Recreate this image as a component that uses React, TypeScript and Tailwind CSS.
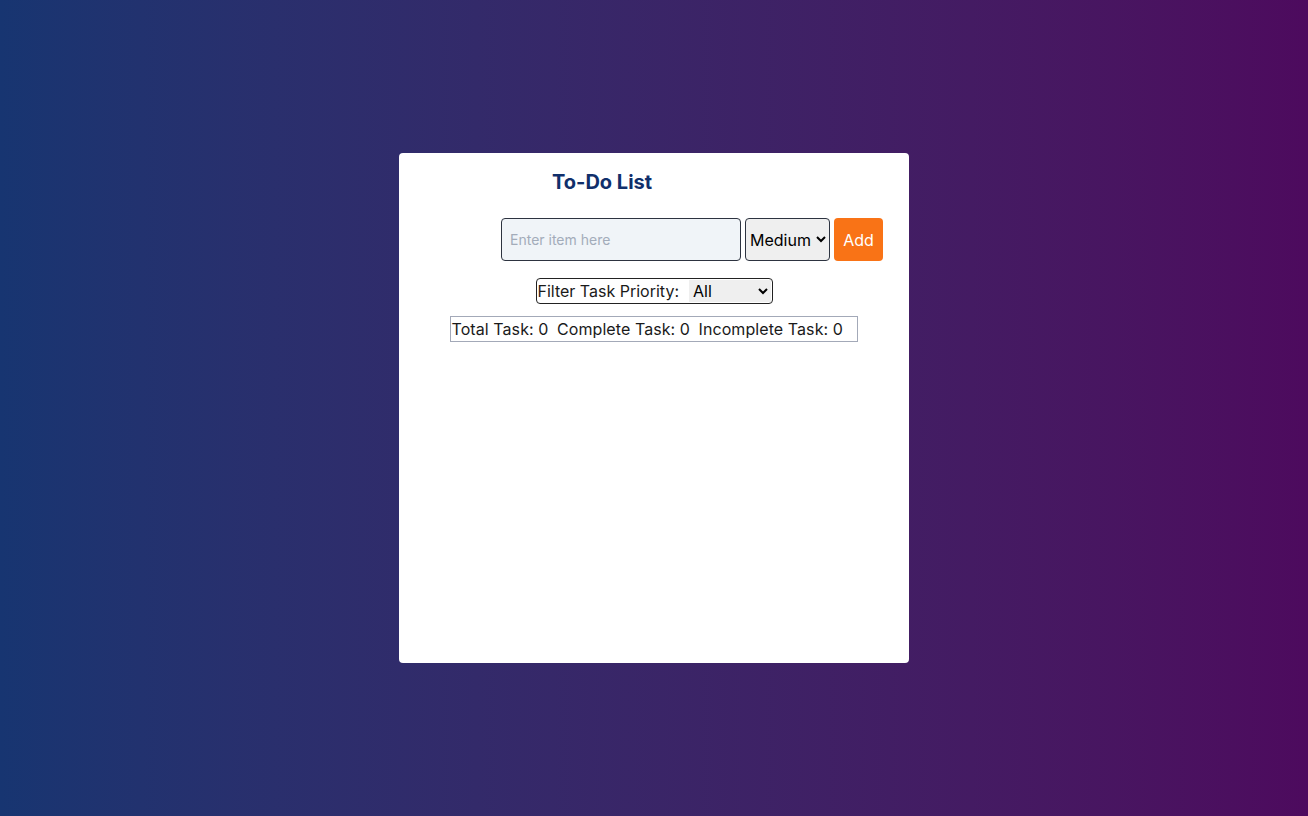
import { useState } from "react";

export default function App() {
  const [item, setItem] = useState("");
  const [priority, setPriority] = useState("Medium");
  const [filter, setFilter] = useState("All");

  return (
    <div
      className="min-h-screen w-full flex items-center justify-center bg-gradient-to-r from-[#173571] to-[#4d0a5e]"
      style={{ fontFamily: "Inter, 'Noto Sans', sans-serif" }}
    >
      <div className="w-[510px] h-[510px] bg-white rounded-[4px] flex flex-col items-center pt-[15px]">
        <div className="w-full pl-[153px]">
          <h1 className="text-[20px] leading-[28px] font-bold text-[#102f6b]">
            To-Do List
          </h1>
        </div>

        <div className="w-full flex justify-end items-center gap-[4px] pr-[26px] mt-[22px]">
          <input
            value={item}
            onChange={(e) => setItem(e.target.value)}
            placeholder="Enter item here"
            className="w-[240px] h-[43px] px-[8px] text-[14px] bg-[#f0f4f8] border border-[#2d3340] rounded-[4px] placeholder:text-[#a3acba] outline-none"
          />
          <select
            value={priority}
            onChange={(e) => setPriority(e.target.value)}
            className="h-[43px] w-[85px] text-[16px] bg-[#efefef] border border-[#2d3340] rounded-[4px] text-black"
          >
            <option>Low</option>
            <option>Medium</option>
            <option>High</option>
          </select>
          <button className="h-[43px] w-[49px] bg-[#f97316] text-white text-[16px] rounded-[4px]">
            Add
          </button>
        </div>

        <div className="mt-[17px] flex items-center gap-[10px] h-[26px] w-[237px] border border-[#222] rounded-[4px] pl-px text-[16px] text-[#1a1a1a]">
          <span>Filter Task Priority:</span>
          <select
            value={filter}
            onChange={(e) => setFilter(e.target.value)}
            className="h-[22px] w-[82px] bg-[#efefef] text-[16px] text-black"
          >
            <option>All</option>
            <option>Low</option>
            <option>Medium</option>
            <option>High</option>
          </select>
        </div>

        <div className="mt-[12px] ml-[-1px] flex items-center gap-[8.5px] h-[26px] w-[408px] border border-[#a3a9b8] px-px text-[16px] tracking-[0.08px] text-[#1a1a1a]">
          <span>Total Task: 0</span>
          <span>Complete Task: 0</span>
          <span>Incomplete Task: 0</span>
        </div>
      </div>
    </div>
  );
}
